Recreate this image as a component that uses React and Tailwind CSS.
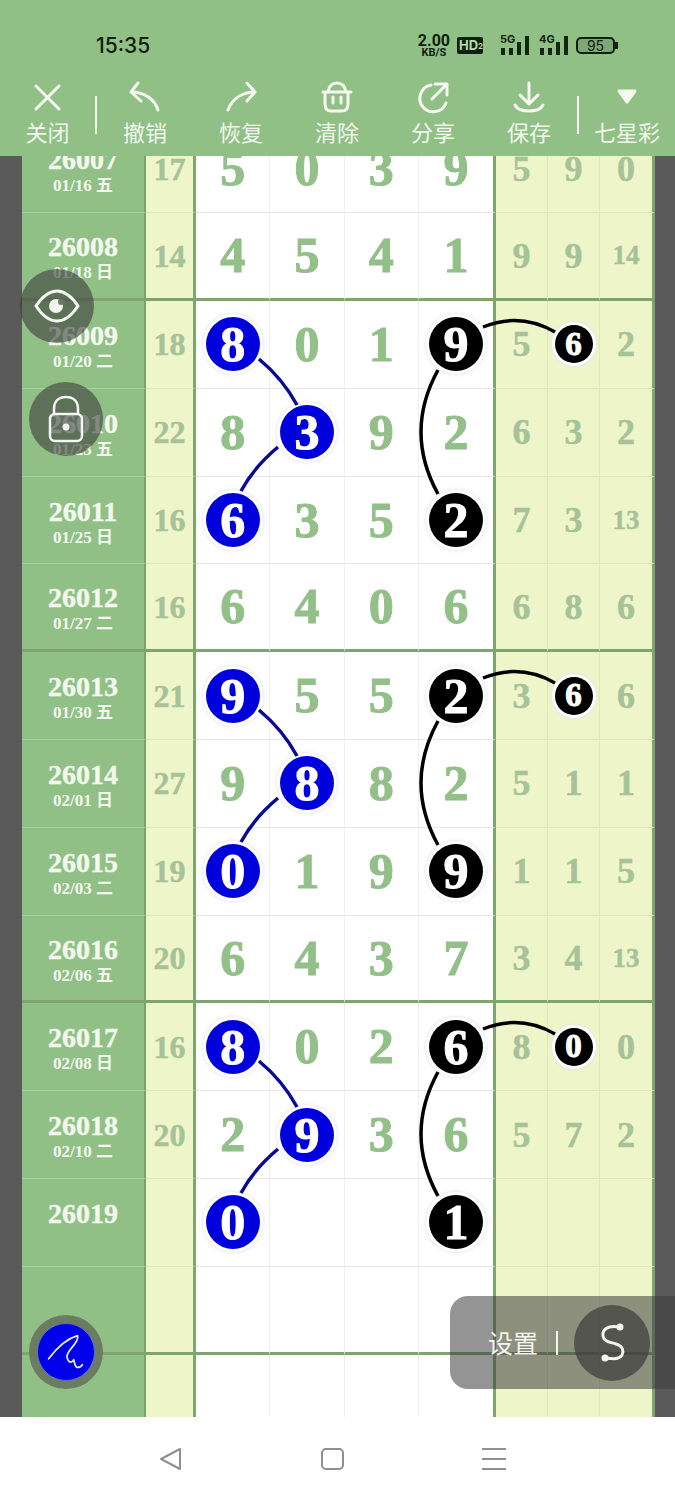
import React from 'react';

const rows = [
  { id: '26007', date: '01/16 五', sum: '17', main: ['5', '0', '3', '9'], side: ['5', '9', '0'] },
  { id: '26008', date: '01/18 日', sum: '14', main: ['4', '5', '4', '1'], side: ['9', '9', '14'] },
  { id: '26009', date: '01/20 二', sum: '18', main: ['8', '0', '1', '9'], side: ['5', '6', '2'], balls: [0, 3], small: 1 },
  { id: '26010', date: '01/23 五', sum: '22', main: ['8', '3', '9', '2'], side: ['6', '3', '2'], balls: [1] },
  { id: '26011', date: '01/25 日', sum: '16', main: ['6', '3', '5', '2'], side: ['7', '3', '13'], balls: [0, 3] },
  { id: '26012', date: '01/27 二', sum: '16', main: ['6', '4', '0', '6'], side: ['6', '8', '6'] },
  { id: '26013', date: '01/30 五', sum: '21', main: ['9', '5', '5', '2'], side: ['3', '6', '6'], balls: [0, 3], small: 1 },
  { id: '26014', date: '02/01 日', sum: '27', main: ['9', '8', '8', '2'], side: ['5', '1', '1'], balls: [1] },
  { id: '26015', date: '02/03 二', sum: '19', main: ['0', '1', '9', '9'], side: ['1', '1', '5'], balls: [0, 3] },
  { id: '26016', date: '02/06 五', sum: '20', main: ['6', '4', '3', '7'], side: ['3', '4', '13'] },
  { id: '26017', date: '02/08 日', sum: '16', main: ['8', '0', '2', '6'], side: ['8', '0', '0'], balls: [0, 3], small: 1 },
  { id: '26018', date: '02/10 二', sum: '20', main: ['2', '9', '3', '6'], side: ['5', '7', '2'], balls: [1] },
  { id: '26019', date: '', sum: '', main: ['0', '', '', '1'], side: ['', '', ''], balls: [0, 3] },
  { id: '', date: '', sum: '', main: ['', '', '', ''], side: ['', '', ''] },
  { id: '', date: '', sum: '', main: ['', '', '', ''], side: ['', '', ''] },
];

const tools = [
  { label: '撤销', icon: <path d="M138 83 L131 92 L141 101 M131 92 C145 92 155 100 158 110" /> },
  { label: '恢复', icon: <path d="M247 83 L255 92 L247 101 M255 92 C242 92 232 99 228 110" /> },
  { label: '清除', icon: <path d="M323 92 H351 M328 92 C329 86 332 83 337 83 C342 83 345 86 346 92 M325 92 V104 C325 109 327 111 331 111 H342 C346 111 348 109 348 104 V92 M333 97 V103 M341 97 V103" /> },
  { label: '分享', icon: <path d="M431 85 A13.5 13.5 0 1 0 446 103 M432 99 L447 84 M435 84 H447 V95" /> },
  { label: '保存', icon: <path d="M529 83 V103 M520 95 L529 104 L538 95 M515 105 C519 113 539 113 543 105" /> },
];

function Signal({ label }) {
  return (
    <div className="relative flex h-[19px] w-[29px] items-end justify-end gap-[4px]">
      <span className="absolute left-0 top-[-2px] text-[11px] font-bold leading-[11px] text-[#12260f]">{label}</span>
      <span className="h-[7px] w-[4px] bg-[#12260f]" />
      <span className="h-[7px] w-[4px] bg-[#12260f]" />
      <span className="h-[13px] w-[4px] bg-[#12260f]" />
      <span className="h-[19px] w-[4px] bg-[#12260f]" />
    </div>
  );
}

function Ball({ value, black, small }) {
  const size = small ? 'h-[38px] w-[38px] text-[33px]' : 'h-[54px] w-[54px] text-[50px]';
  const color = black ? 'bg-black' : 'bg-[#0000dd]';
  return (
    <div className={`flex items-center justify-center rounded-full font-bold leading-none text-white [-webkit-text-stroke:1px_white] shadow-[0_0_0_3px_rgba(255,255,255,0.95),0_0_3px_4px_rgba(228,228,240,0.8)] ${size} ${color}`}>
      {value}
    </div>
  );
}

function Row({ row, idx }) {
  const groupEnd = idx % 4 === 1;
  const line = groupEnd ? 'border-b-[3px] border-b-[#7ea56f]' : 'border-b border-b-[#e6e8ee]';
  const yellowLine = groupEnd ? 'border-b-[3px] border-b-[#7ea56f]' : 'border-b border-b-[#dfe9b8]';
  const greenLine = groupEnd ? 'border-b-[3px] border-b-[#7ea56f]' : 'border-b border-b-[#a9d0a0]';
  return (
    <div className="flex h-[87.8px] font-['Liberation_Serif','Noto_Sans_CJK_SC',serif] font-bold">
      <div className="w-[22px] bg-[#5a5a5a]" />
      <div className={`flex w-[124px] flex-col items-center justify-center border-r-2 border-r-[#79a26c] bg-[#90c086] text-[#f3f8ee] ${greenLine}`}>
        <div className="h-[33px] pt-[3px] text-[28px] leading-[30px] [-webkit-text-stroke:0.4px_#f3f8ee]">{row.id}</div>
        <div className="h-[20px] pt-[1px] text-[17px] leading-[20px]">{row.date}</div>
      </div>
      <div className={`flex w-[50px] items-center justify-center border-r-[3px] border-r-[#7ea56f] bg-[#eef6c9] text-[32px] text-[#a7c299] [-webkit-text-stroke:0.5px_#a7c299] ${yellowLine}`}>
        {row.sum}
      </div>
      {row.main.map((value, i) => {
        const isBall = row.balls && row.balls.includes(i);
        return (
          <div
            key={i}
            className={`flex items-center justify-center bg-white text-[50px] text-[#93bf89] ${isBall ? '' : '[-webkit-text-stroke:1px_#93bf89]'} ${line} ${i === 3 ? 'w-[77.25px] border-r-[3px] border-r-[#7ea56f]' : 'w-[74.25px] border-r border-r-[#eeeff4]'}`}
          >
            {isBall ? <Ball value={value} black={i === 3} /> : value}
          </div>
        );
      })}
      {row.side.map((value, i) => (
        <div
          key={i}
          className={`flex items-center justify-center bg-[#eef6c9] text-[#a7c299] ${row.small === i ? '' : '[-webkit-text-stroke:0.5px_#a7c299]'} ${value.length > 1 ? 'text-[27px]' : 'text-[36px]'} ${yellowLine} ${i === 2 ? 'w-[55px] border-r-[3px] border-r-[#7ea56f]' : 'w-[52px] border-r border-r-[#dfe9b8]'}`}
        >
          {row.small === i ? <Ball value={value} black small /> : value}
        </div>
      ))}
      <div className="w-[20px] bg-[#5a5a5a]" />
    </div>
  );
}

function Curves({ dy }) {
  return (
    <g transform={`translate(0 ${dy})`} fill="none" strokeWidth="3.5">
      <path d="M259 359 Q283 379 297 405" stroke="#0a0a96" />
      <path d="M278 447 Q254 467 241 491" stroke="#0a0a96" />
      <path d="M438 370 Q404 432 438 494" stroke="#000" />
      <path d="M483 327 Q520 312 555 332" stroke="#000" />
    </g>
  );
}

export default function App() {
  return (
    <div className="relative h-[1500px] w-[675px] overflow-hidden bg-white font-['Noto_Sans_CJK_SC',sans-serif]">
      {/* top bar */}
      <div className="h-[156px] bg-[#90c086]">
        <div className="flex h-[76px] items-center pl-[96px] pr-[57px] pt-[15px] font-['Inter',sans-serif] text-[#10200e]">
          <div className="text-[21px] font-medium leading-none">15:35</div>
          <div className="ml-auto flex flex-col items-center font-['Roboto',sans-serif] font-bold leading-none">
            <span className="text-[16px] leading-[13px]">2.00</span>
            <span className="text-[11px] leading-[11px]">KB/S</span>
          </div>
          <div className="ml-[7px] flex h-[17px] w-[26px] items-center rounded-[2px] bg-[#10200e] pl-[2px] text-[13px] font-bold leading-none text-[#b8d8b0]">
            HD<span className="text-[8px]">2</span>
          </div>
          <div className="ml-[17px]"><Signal label="5G" /></div>
          <div className="ml-[10px]"><Signal label="4G" /></div>
          <div className="ml-[8px] flex items-center">
            <div className="flex h-[17px] w-[39px] items-center justify-center rounded-[5px] border-2 border-[#10200e] bg-[#7fa878] text-[14px] leading-none">95</div>
            <div className="h-[7px] w-[3px] bg-[#10200e]" />
          </div>
        </div>
        <div className="flex h-[80px] text-[22px] leading-none text-[#f1f6ec]">
          <div className="flex h-[66px] w-[95px] flex-col items-center justify-end">关闭</div>
          <div className="mt-[20px] h-[38px] w-[2px] bg-[#f1f6ec]" />
          {tools.map((tool) => (
            <div key={tool.label} className="flex h-[66px] w-[96px] flex-col items-center justify-end">{tool.label}</div>
          ))}
          <div className="mt-[20px] h-[38px] w-[2px] bg-[#f1f6ec]" />
          <div className="flex h-[66px] w-[96px] flex-col items-center justify-end">七星彩</div>
        </div>
      </div>

      {/* table */}
      <div className="h-[1261px] overflow-hidden">
        <div className="-mt-[30.5px]">
          {rows.map((row, idx) => <Row key={idx} row={row} idx={idx} />)}
        </div>
      </div>

      {/* bottom nav */}
      <div className="relative flex h-[83px] items-center bg-white">
        <svg className="ml-[158px]" width="26" height="26" viewBox="0 0 26 26" fill="none" stroke="#8f8f8f" strokeWidth="2" strokeLinejoin="round">
          <path d="M3 13 L22 3 V23 Z" />
        </svg>
        <div className="ml-[137px] h-[22px] w-[23px] rounded-[5px] border-2 border-[#8f8f8f]" />
        <div className="ml-[138px] flex h-[22px] w-[24px] flex-col justify-between">
          <div className="h-[2px] bg-[#8f8f8f]" />
          <div className="h-[2px] bg-[#8f8f8f]" />
          <div className="h-[2px] bg-[#8f8f8f]" />
        </div>
      </div>

      {/* connector curves + toolbar icons */}
      <svg className="pointer-events-none absolute left-0 top-0" width="675" height="1500" viewBox="0 0 675 1500">
        <Curves dy={0} />
        <Curves dy={351} />
        <Curves dy={702} />
        <g fill="none" stroke="#f4f8ef" strokeWidth="3" strokeLinecap="round" strokeLinejoin="round">
          <path d="M36 86 L59 109 M59 86 L36 109" />
          {tools.map((tool) => <g key={tool.label}>{tool.icon}</g>)}
          <path d="M619 91 H635 L627 102 Z" fill="#f4f8ef" />
        </g>
      </svg>

      {/* floating buttons */}
      <div className="absolute left-[20px] top-[269px] flex h-[74px] w-[74px] items-center justify-center rounded-full bg-[#3c3c3c]/60">
        <svg width="46" height="34" viewBox="0 0 46 34" fill="none" stroke="#f4f6f2" strokeWidth="3">
          <path d="M2 17 C10 5 17 2 23 2 C29 2 36 5 44 17 C36 29 29 32 23 32 C17 32 10 29 2 17 Z" />
          <circle cx="22" cy="17" r="7" fill="#f4f6f2" stroke="none" />
          <circle cx="27" cy="13" r="3" fill="#6b7c62" stroke="none" />
        </svg>
      </div>
      <div className="absolute left-[29px] top-[382px] flex h-[74px] w-[74px] items-center justify-center rounded-full bg-[#3c3c3c]/60">
        <svg width="36" height="48" viewBox="0 0 36 48" fill="none" stroke="#f4f6f2" strokeWidth="2.5">
          <rect x="2" y="19" width="32" height="27" rx="5" />
          <path d="M6 19 V14 C6 6 11 2 18 2 C25 2 30 6 30 14 V19" />
          <circle cx="18" cy="32" r="3.5" fill="#f4f6f2" stroke="none" />
        </svg>
      </div>
      <div className="absolute left-[29px] top-[1315px] flex h-[74px] w-[74px] items-center justify-center rounded-full bg-[#6c7c60]">
        <div className="flex h-[58px] w-[58px] items-center justify-center rounded-full border border-[#5a70c0] bg-[#0000ea]">
          <svg width="58" height="58" viewBox="0 0 58 58" fill="none" stroke="#e8e8ff" strokeWidth="1.8" strokeLinecap="round" strokeLinejoin="round">
            <path d="M11 36 C20 24 30 15 41 12 C43 20 30 26 30 34 C31 40 35 41 37 37 C38 40 38 45 41 45 C43 45 45 44 46 42" />
          </svg>
        </div>
      </div>
      <div className="absolute left-[450px] top-[1296px] flex h-[93px] w-[225px] items-center rounded-l-[18px] bg-[#3c3c3c]/55 pl-[38px]">
        <span className="text-[25px] leading-none text-[#f4f4f0]">设置</span>
        <div className="ml-[18px] h-[24px] w-[2px] bg-[#f4f4f0]" />
        <div className="ml-[16px] flex h-[76px] w-[76px] items-center justify-center rounded-full bg-[#3c3c3c]/70">
          <svg width="34" height="44" viewBox="0 0 34 44" fill="none" stroke="#f4f4f0" strokeWidth="3" strokeLinecap="round">
            <path d="M24 6 C12 4 7 9 8 15 C9 21 15 21 21 23 C28 25 29 30 27 34 C24 39 17 38 11 37" />
            <circle cx="25" cy="6" r="3.5" fill="#f4f4f0" stroke="none" />
            <circle cx="10" cy="37" r="3.5" fill="#f4f4f0" stroke="none" />
          </svg>
        </div>
      </div>
    </div>
  );
}
